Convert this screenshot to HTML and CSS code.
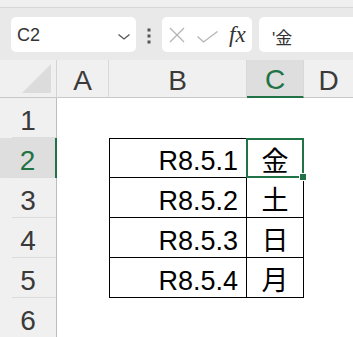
FILE: index.html
```html
<!DOCTYPE html>
<html lang="ja">
<head>
    <meta charset="UTF-8">
    <meta name="viewport" content="width=device-width, initial-scale=1.0">
    <title>Sheet1</title>
    <link rel="stylesheet" href="styles.css">
</head>
<body>
    <div class="top-strip"></div>

    <div class="formula-bar">
        <div class="name-box">
            <span>C2</span>
            <svg class="chevron" width="12" height="6" viewBox="0 0 12 6">
                <polyline points="0.5,0.5 6,5 11.5,0.5" fill="none" stroke="#555" stroke-width="1.3"/>
            </svg>
        </div>
        <svg class="dots" width="4" height="16" viewBox="0 0 4 16">
            <rect x="0.5" y="0.5" width="3" height="3" fill="#555"/>
            <rect x="0.5" y="6.5" width="3" height="3" fill="#555"/>
            <rect x="0.5" y="12.5" width="3" height="3" fill="#555"/>
        </svg>
        <div class="fx-box">
            <svg class="cancel" width="16" height="16" viewBox="0 0 16 16">
                <line x1="1" y1="1" x2="15" y2="15" stroke="#b4b4b4" stroke-width="1.3"/>
                <line x1="15" y1="1" x2="1" y2="15" stroke="#b4b4b4" stroke-width="1.3"/>
            </svg>
            <svg class="enter" width="21" height="12" viewBox="0 0 21 12">
                <polyline points="0.5,5.5 6.5,11 20.5,0.5" fill="none" stroke="#b4b4b4" stroke-width="1.3"/>
            </svg>
            <span class="fx">fx</span>
        </div>
        <div class="formula-input">'金</div>
    </div>

    <div class="sheet">
        <!-- header row -->
        <div class="corner">
            <svg width="30" height="29" viewBox="0 0 30 29">
                <polygon points="29,0 29,29 0,29" fill="#dcdcdc"/>
            </svg>
        </div>
        <div class="col-head">A</div>
        <div class="col-head">B</div>
        <div class="col-head active">C</div>
        <div class="col-head last">D</div>

        <!-- row 1 -->
        <div class="row-head">1</div>
        <div class="cell"></div>
        <div class="cell"></div>
        <div class="cell"></div>
        <div class="cell"></div>

        <!-- row 2 -->
        <div class="row-head active">2</div>
        <div class="cell"></div>
        <div class="cell date first-row">R8.5.1</div>
        <div class="cell day first-row selected">金</div>
        <div class="cell"></div>

        <!-- row 3 -->
        <div class="row-head">3</div>
        <div class="cell"></div>
        <div class="cell date">R8.5.2</div>
        <div class="cell day">土</div>
        <div class="cell"></div>

        <!-- row 4 -->
        <div class="row-head">4</div>
        <div class="cell"></div>
        <div class="cell date">R8.5.3</div>
        <div class="cell day">日</div>
        <div class="cell"></div>

        <!-- row 5 -->
        <div class="row-head">5</div>
        <div class="cell"></div>
        <div class="cell date">R8.5.4</div>
        <div class="cell day">月</div>
        <div class="cell"></div>

        <!-- row 6 -->
        <div class="row-head">6</div>
        <div class="cell"></div>
        <div class="cell"></div>
        <div class="cell"></div>
        <div class="cell"></div>
    </div>
</body>
</html>
```

FILE: styles.css
```css
* {
    box-sizing: border-box;
}
body {
    margin: 0;
    width: 353px;
    height: 337px;
    overflow: hidden;
    background-color: #fff;
    font-family: "Liberation Sans", Arial, sans-serif;
    color: #333;
}
.top-strip {
    height: 8px;
    background-color: #efefef;
    border-bottom: 1px solid #d6d6d6;
}
.formula-bar {
    display: flex;
    align-items: center;
    height: 52px;
    padding: 9px 0 8px 11px;
    background-color: #e9e9e9;
    overflow: hidden;
}
.name-box, .fx-box, .formula-input {
    height: 35px;
    background-color: #fff;
    border-radius: 5px;
    flex-shrink: 0;
}
.name-box {
    width: 125px;
    display: flex;
    align-items: center;
    justify-content: space-between;
    padding: 2px 6px 0 6px;
    font-size: 18px;
}
.chevron {
    margin-top: 2px;
}
.dots {
    margin: 2px 11px 0 11px;
    flex-shrink: 0;
}
.fx-box {
    width: 90px;
    display: flex;
    align-items: center;
    padding: 0 6px 0 7px;
}
.cancel {
    margin-right: 12px;
}
.enter {
    margin-top: 4px;
}
.fx {
    margin-left: 11px;
    font-family: "Liberation Serif", "Times New Roman", serif;
    font-style: italic;
    font-size: 23px;
    color: #333;
}
.formula-input {
    width: 120px;
    margin-left: 7px;
    padding: 7px 0 0 13px;
    font-size: 17px;
    font-family: "Liberation Sans", "Noto Sans CJK JP", sans-serif;
}

/* sheet grid */
.sheet {
    display: grid;
    grid-template-columns: 57px 52px 138px 57px 1fr;
    grid-template-rows: 38px repeat(6, 40px);
}
.corner {
    display: flex;
    align-items: flex-end;
    justify-content: flex-end;
    padding: 0 4px 4px 0;
    background-color: #f0f0f0;
    border-right: 1px solid #d4d4d4;
    border-bottom: 1px solid #c8c8c8;
}
.col-head {
    display: flex;
    align-items: flex-end;
    justify-content: center;
    background-color: #f0f0f0;
    border-right: 1px solid #d8d8d8;
    border-bottom: 1px solid #c8c8c8;
    font-size: 28px;
    color: #3a3a3a;
}
.col-head.last {
    border-right: none;
}
.col-head.active {
    background-color: #dedede;
    border-bottom: 2px solid #217346;
    color: #217346;
}
.row-head {
    display: flex;
    align-items: flex-end;
    justify-content: center;
    padding-bottom: 1px;
    background: #f0f0f0 linear-gradient(#dcdcdc, #dcdcdc) no-repeat 12px 100% / calc(100% - 12px) 1px;
    border-right: 1px solid #bdbdbd;
    font-size: 28px;
    color: #3a3a3a;
}
.row-head.active {
    background-color: #dedede;
    border-right: 2px solid #217346;
    color: #217346;
}
.cell {
    background-color: #fff;
}
.cell.date, .cell.day {
    border-right: 1px solid #000;
    border-bottom: 1px solid #000;
    color: #000;
}
.cell.date {
    border-left: 1px solid #000;
    display: flex;
    align-items: flex-end;
    justify-content: flex-end;
    padding-right: 8px;
    font-size: 27px;
}
.cell.day {
    display: flex;
    align-items: center;
    justify-content: center;
    padding-top: 2px;
    font-family: "Noto Sans CJK JP", sans-serif;
    font-size: 27px;
}
.cell.first-row {
    border-top: 1px solid #000;
}
.cell.selected {
    position: relative;
}
.cell.selected::after {
    content: "";
    position: absolute;
    top: -1px;
    left: -1px;
    right: -1px;
    bottom: -1px;
    border: 2px solid #217346;
}
.cell.selected::before {
    content: "";
    position: absolute;
    right: -4px;
    bottom: -4px;
    width: 6px;
    height: 6px;
    background-color: #217346;
    border: 1px solid #fff;
    z-index: 1;
}
```
